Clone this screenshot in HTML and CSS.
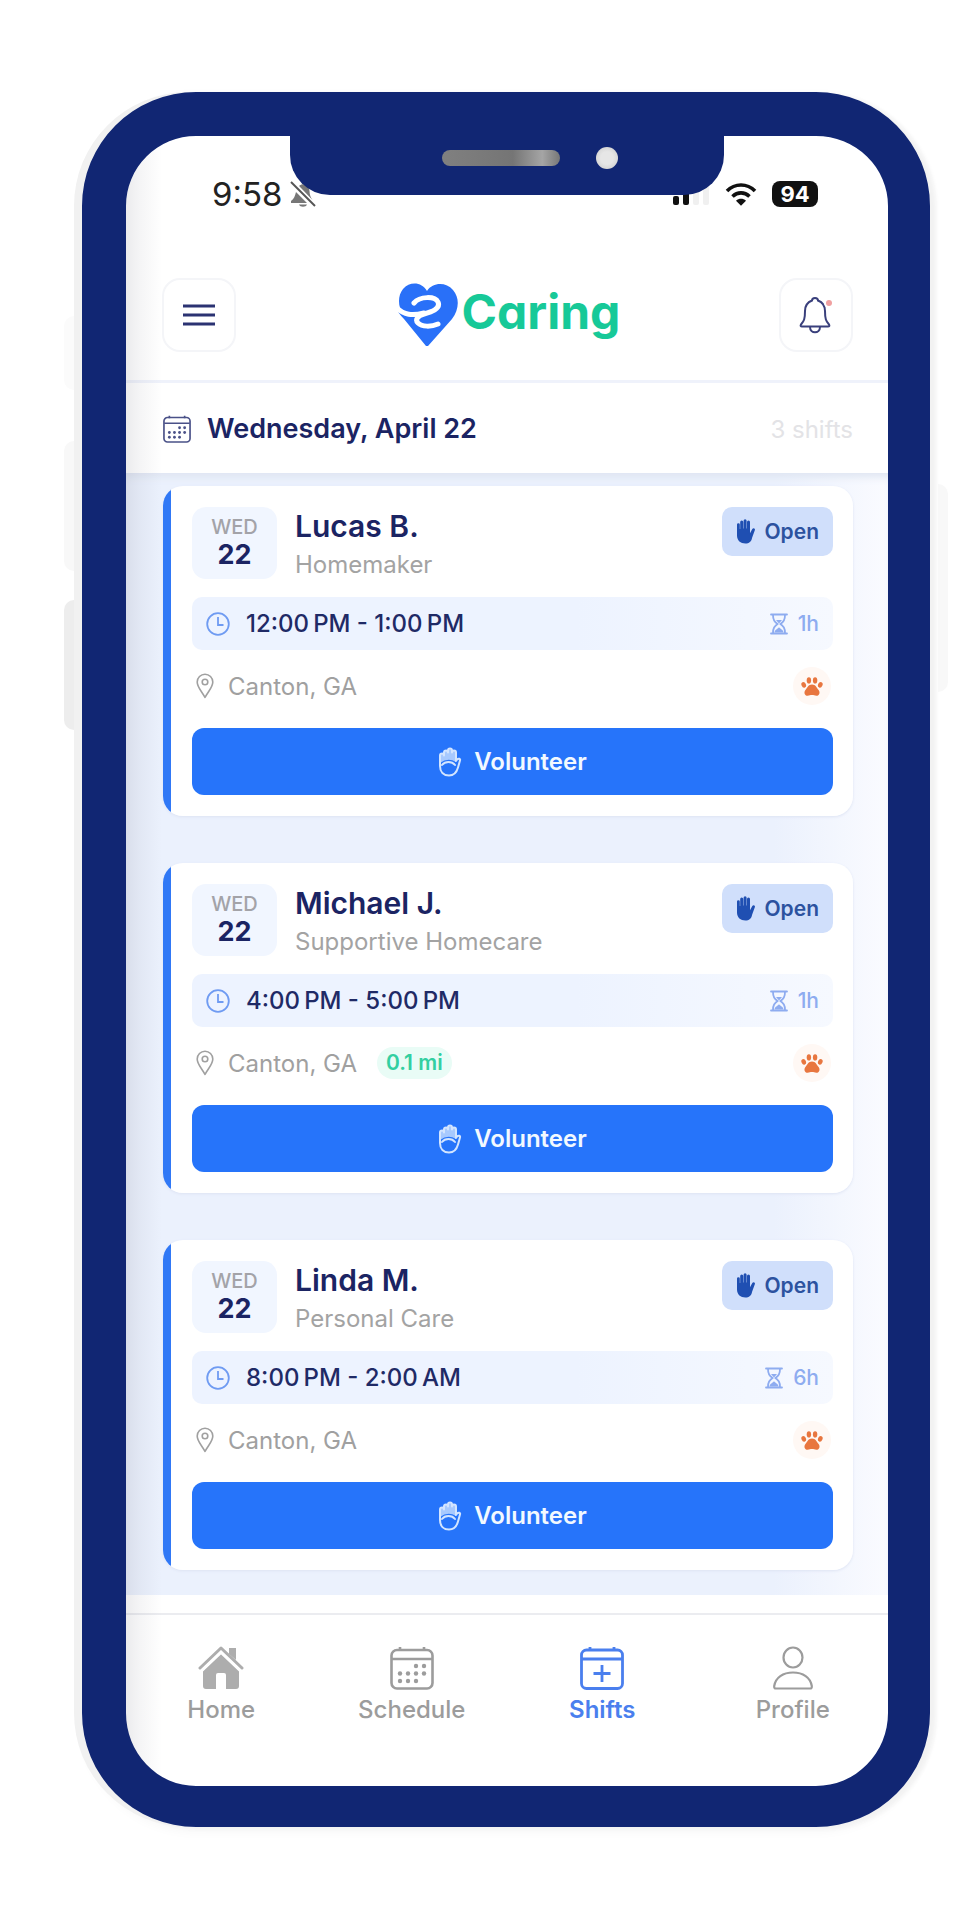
FILE: index.html
```html
<!DOCTYPE html>
<html lang="en">
<head>
    <meta charset="UTF-8">
    <meta name="viewport" content="width=device-width, initial-scale=1.0">
    <title>eCaring - Shifts</title>
    <link rel="stylesheet" href="styles.css">
</head>
<body>
    <!-- Icons shared by the cards -->
    <svg class="sprite" aria-hidden="true">
        <symbol id="hand-fill" viewBox="0 0 20 25">
            <path fill="currentColor" d="M1 5.600a1.400 1.400 0 0 1 2.800 0V10h.4V3a1.400 1.400 0 0 1 3 0v6.400h.4V1.700a1.500 1.500 0 0 1 3 0v7.700h.4V3a1.400 1.400 0 0 1 3 0v11.200l2.300-4.300c.9-1.500 3.200-.6 2.600 1.200l-2.800 7.600C15.600 22.400 13 24.500 9.400 24.500 4.600 24.500 1 21.500 1 16.500z"/>
        </symbol>
        <symbol id="hand-line" viewBox="0 0 24 30">
            <path fill="currentColor" opacity=".75" d="M2 15V8q2-3 4-1V5q2-3 4-1 2-4 4 0 3-2 4 1v10q-8-5-16 1z"/>
            <g fill="none" stroke="currentColor" stroke-width="2" stroke-linecap="round" stroke-linejoin="round">
                <path d="M2 17V8.500a2 2 0 0 1 4 0V5.500a2 2 0 0 1 4 0V3.500a2 2 0 0 1 4 0v2a2 2 0 0 1 4 0V14l1-1.500c1.500-1.500 3.700-.8 3 1l-2 7C18.500 26 16 28.500 11 28.500 5.500 28.500 2 25 2 19v-2"/>
                <path d="M4 18c3-4 10-4 13 0"/>
            </g>
        </symbol>
        <symbol id="clock" viewBox="0 0 24 24">
            <circle cx="12" cy="12" r="10.800" fill="none" stroke="currentColor" stroke-width="1.800"/>
            <path d="M12 5v8h5.500" fill="none" stroke="currentColor" stroke-width="1.800"/>
        </symbol>
        <symbol id="hourglass" viewBox="0 0 18 22">
            <path d="M1 1.500h16M1 20.500h16M3 2c0 5 1.500 6.500 4.500 9C4.500 13.500 3 15 3 20M15 2c0 5-1.500 6.500-4.500 9 3 2.500 4.500 4 4.500 9" fill="none" stroke="currentColor" stroke-width="1.800" stroke-linecap="round"/>
            <path d="M6 7h6l-3 3.500zM4.500 19.500c0-3 4.500-4 4.500-5.500 0 1.500 4.500 2.500 4.500 5.500z" fill="currentColor"/>
        </symbol>
        <symbol id="pin" viewBox="0 0 18 26">
            <path d="M9 24.500C6 18.500 1.200 14.500 1.200 9a7.800 7.800 0 0 1 15.600 0c0 5.500-4.800 9.500-7.800 15.500z" fill="none" stroke="currentColor" stroke-width="1.600" stroke-linejoin="round"/>
            <circle cx="9" cy="9" r="2.800" fill="none" stroke="currentColor" stroke-width="1.600"/>
        </symbol>
        <symbol id="paw" viewBox="0 0 22 19">
            <g fill="currentColor">
                <ellipse cx="2.700" cy="7.800" rx="2.200" ry="2.900" transform="rotate(-25 2.700 7.800)"/>
                <ellipse cx="7.900" cy="3.400" rx="2.200" ry="3.100"/>
                <ellipse cx="14.100" cy="3.400" rx="2.200" ry="3.100"/>
                <ellipse cx="19.300" cy="7.800" rx="2.200" ry="2.900" transform="rotate(25 19.300 7.800)"/>
                <path d="M11 7.500c3.600 0 4.600 3.200 6.400 5.200 2.200 2.500 1 6.100-1.900 6.100-1.900 0-2.900-.7-4.500-.7s-2.600.7-4.500.7c-2.900 0-4.100-3.600-1.900-6.100 1.800-2 2.800-5.200 6.400-5.200z"/>
            </g>
        </symbol>
        <symbol id="calendar" viewBox="0 0 44 44">
            <g fill="none" stroke="currentColor" stroke-width="2.600">
                <rect x="1.500" y="4" width="41" height="38.500" rx="5.500"/>
                <path d="M2 13h40M10 1v4M34 1v4"/>
            </g>
            <g fill="currentColor">
                <circle cx="26" cy="20" r="2.200"/><circle cx="34" cy="20" r="2.200"/>
                <circle cx="10" cy="27.500" r="2.200"/><circle cx="18" cy="27.500" r="2.200"/><circle cx="26" cy="27.500" r="2.200"/><circle cx="34" cy="27.500" r="2.200"/>
                <circle cx="10" cy="35" r="2.200"/><circle cx="18" cy="35" r="2.200"/><circle cx="26" cy="35" r="2.200"/>
            </g>
        </symbol>
    </svg>

    <div class="phone">
        <span class="side-btn silent"></span>
        <span class="side-btn vol-up"></span>
        <span class="side-btn vol-down"></span>
        <span class="side-btn power"></span>

        <div class="notch">
            <span class="speaker"></span>
            <span class="camera"></span>
        </div>

        <div class="screen">
            <div class="status-bar">
                <div class="status-left">
                    <span class="time">9:58</span>
                    <svg width="26" height="28" viewBox="0 0 26 28" aria-hidden="true">
                        <path fill="#777" d="M1 21c3-2 4-5 5-9l11 11H1zM9 6c4-4 10-1 10.500 5 .2 4 1 6 3 9zM9 24.500h8c-1 3-7 3-8 0z"/>
                        <path d="M2 2l23 24" stroke="#fff" stroke-width="4"/>
                        <path d="M1 2l24 24" stroke="#555" stroke-width="2"/>
                    </svg>
                </div>
                <div class="status-right">
                    <svg width="38" height="24" viewBox="0 0 38 24" aria-hidden="true">
                        <rect x="1" y="14" width="6" height="9" rx="2" fill="#111"/>
                        <rect x="11" y="10" width="6" height="13" rx="2" fill="#111"/>
                        <rect x="21" y="5" width="6" height="18" rx="2" fill="#f0f0f0"/>
                        <rect x="31" y="0" width="6" height="23" rx="2" fill="#f0f0f0"/>
                    </svg>
                    <svg width="32" height="24" viewBox="0 0 32 24" aria-hidden="true">
                        <path d="M2 9c8-8 20-8 28 0M7.500 14.500c5-4.800 12-4.800 17 0" fill="none" stroke="#111" stroke-width="3.600"/>
                        <path d="M11 18.800c3-2.600 7-2.600 10 0l-5 4.900z" fill="#111"/>
                    </svg>
                    <span class="battery">94</span>
                </div>
            </div>

            <header class="header">
                <button class="icon-btn" type="button" aria-label="Menu">
                    <svg width="32" height="24" viewBox="0 0 32 24"><path d="M0 3h32M0 12h32M0 21h32" stroke="#2b3272" stroke-width="3"/></svg>
                </button>
                <a class="logo" href="#">
                    <svg width="64" height="64" viewBox="0 0 64 64" aria-hidden="true">
                        <path fill="#2970f8" d="M32 8C38-1 51-1 58 7c7 8 6 20-1 29L33 63h-2L9 36C5 32 2 28 1 23l4 2C3 18 4 11 8 6c7-8 19-7 24 2z"/>
                        <path d="M19 20c6-7 21-7 24-1 3 7-7 10-14 12-7 2-9 6-6 9 4 4 13 4 20 1M2 25c7 7 15 8 27 5" fill="none" stroke="#fff" stroke-width="5" stroke-linecap="round"/>
                    </svg>
                    <span class="logo-text">Caring</span>
                </a>
                <button class="icon-btn" type="button" aria-label="Notifications">
                    <svg width="34" height="40" viewBox="0 0 34 40">
                        <path d="M16 3c-2 0-3 1-3 2.500C8 7.500 6 11 6 16c0 8-1 10-4 13.500-.8 1.200-.3 2 1 2h26c1.300 0 1.800-.8 1-2C27 26 26 24 26 16c0-5-2-8.500-7-10.500C19 4 18 3 16 3zM11 32c0 7 10 7 10 0" fill="none" stroke="#3a407c" stroke-width="2"/>
                        <circle cx="30" cy="8" r="5" fill="#fff"/>
                        <circle cx="30" cy="8" r="3" fill="#f0a0a0"/>
                    </svg>
                </button>
            </header>

            <div class="date-bar">
                <svg class="date-icon" width="28" height="28"><use href="#calendar"/></svg>
                <h1>Wednesday, April 22</h1>
                <span class="count">3 shifts</span>
            </div>

            <main class="shifts">
                <article class="card">
                    <div class="card-top">
                        <div class="day"><span>WED</span><b>22</b></div>
                        <div class="who">
                            <h2>Lucas B.</h2>
                            <p>Homemaker</p>
                        </div>
                        <span class="badge"><svg width="20" height="25"><use href="#hand-fill"/></svg>Open</span>
                    </div>
                    <div class="hours">
                        <svg width="24" height="24"><use href="#clock"/></svg>
                        <span class="range">12:00&#8239;PM - 1:00&#8239;PM</span>
                        <span class="length"><svg width="18" height="22"><use href="#hourglass"/></svg>1h</span>
                    </div>
                    <div class="place">
                        <svg width="18" height="26"><use href="#pin"/></svg>
                        <span>Canton, GA</span>
                        <span class="pets"><svg width="22" height="19"><use href="#paw"/></svg></span>
                    </div>
                    <button class="volunteer" type="button"><svg width="24" height="30"><use href="#hand-line"/></svg>Volunteer</button>
                </article>

                <article class="card">
                    <div class="card-top">
                        <div class="day"><span>WED</span><b>22</b></div>
                        <div class="who">
                            <h2>Michael J.</h2>
                            <p>Supportive Homecare</p>
                        </div>
                        <span class="badge"><svg width="20" height="25"><use href="#hand-fill"/></svg>Open</span>
                    </div>
                    <div class="hours">
                        <svg width="24" height="24"><use href="#clock"/></svg>
                        <span class="range">4:00&#8239;PM - 5:00&#8239;PM</span>
                        <span class="length"><svg width="18" height="22"><use href="#hourglass"/></svg>1h</span>
                    </div>
                    <div class="place">
                        <svg width="18" height="26"><use href="#pin"/></svg>
                        <span>Canton, GA</span>
                        <span class="distance">0.1 mi</span>
                        <span class="pets"><svg width="22" height="19"><use href="#paw"/></svg></span>
                    </div>
                    <button class="volunteer" type="button"><svg width="24" height="30"><use href="#hand-line"/></svg>Volunteer</button>
                </article>

                <article class="card">
                    <div class="card-top">
                        <div class="day"><span>WED</span><b>22</b></div>
                        <div class="who">
                            <h2>Linda M.</h2>
                            <p>Personal Care</p>
                        </div>
                        <span class="badge"><svg width="20" height="25"><use href="#hand-fill"/></svg>Open</span>
                    </div>
                    <div class="hours">
                        <svg width="24" height="24"><use href="#clock"/></svg>
                        <span class="range">8:00&#8239;PM - 2:00&#8239;AM</span>
                        <span class="length"><svg width="18" height="22"><use href="#hourglass"/></svg>6h</span>
                    </div>
                    <div class="place">
                        <svg width="18" height="26"><use href="#pin"/></svg>
                        <span>Canton, GA</span>
                        <span class="pets"><svg width="22" height="19"><use href="#paw"/></svg></span>
                    </div>
                    <button class="volunteer" type="button"><svg width="24" height="30"><use href="#hand-line"/></svg>Volunteer</button>
                </article>
            </main>

            <nav class="tabs">
                <a href="#home">
                    <svg width="46" height="44" viewBox="0 0 46 44" fill="#adadad">
                        <path d="M5 24L23 7l18 17v16a3 3 0 0 1-3 3H28V29a2 2 0 0 0-2-2h-6a2 2 0 0 0-2 2v14H8a3 3 0 0 1-3-3z"/>
                        <path d="M31 2h7v12l-7-6z"/>
                        <path d="M4 25L23 7l19 18" fill="none" stroke="#fff" stroke-width="2"/>
                        <path d="M2 22L23 2l21 20" fill="none" stroke="#adadad" stroke-width="3" stroke-linecap="round" stroke-linejoin="round"/>
                    </svg>
                    Home
                </a>
                <a href="#schedule">
                    <svg width="44" height="44"><use href="#calendar"/></svg>
                    Schedule
                </a>
                <a class="active" href="#shifts">
                    <svg width="44" height="44" viewBox="0 0 44 44" fill="none" stroke="currentColor" stroke-width="2.800">
                        <rect x="1.500" y="4" width="41" height="38.500" rx="5"/>
                        <path d="M2 13h40M10 1v4M34 1v4M22 19v17M13.500 27.500h17"/>
                    </svg>
                    Shifts
                </a>
                <a href="#profile">
                    <svg width="44" height="44" viewBox="0 0 44 44" fill="none" stroke="currentColor" stroke-width="2.200">
                        <ellipse cx="22" cy="11.500" rx="9.500" ry="10"/>
                        <path d="M5 42.500c-1.500 0-2-1-1.800-2.500C4.500 31.500 12 26.500 22 26.500S39.500 31.500 40.800 40c.2 1.500-.3 2.500-1.800 2.500z"/>
                    </svg>
                    Profile
                </a>
            </nav>
        </div>
    </div>
</body>
</html>
```

FILE: styles.css
```css
* {
    margin: 0;
    padding: 0;
    box-sizing: border-box;
}

body {
    font-family: Inter, "Liberation Sans", sans-serif;
    background: #fff;
    color: #1b2463;
    padding: 92px 50px 94px 82px;
}

a {
    text-decoration: none;
}

button {
    font-family: inherit;
    cursor: pointer;
}

svg {
    display: block;
    flex: none;
}

.sprite {
    position: absolute;
    width: 0;
    height: 0;
}

/* Phone body */
.phone {
    position: relative;
    border: solid #112673;
    border-width: 44px 42px 41px 44px;
    border-radius: 114px;
    background: #fff;
    box-shadow: -8px 0 0 #f1f1f1, 6px 2px 4px #f2f2f2, 0 4px 12px #f6f6f6;
}

.side-btn {
    position: absolute;
    left: -62px;
    width: 10px;
    height: 130px;
    border-radius: 10px 0 0 10px;
    background: #f8f8f8;
}

.silent {
    top: 180px;
    height: 74px;
    background: #fbfbfb;
}

.vol-up {
    top: 305px;
}

.vol-down {
    top: 464px;
    background: #ededed;
}

.power {
    top: 348px;
    left: auto;
    right: -60px;
    height: 208px;
    border-radius: 0 10px 10px 0;
}

.notch {
    position: absolute;
    z-index: 2;
    top: -1px;
    left: 50%;
    width: 434px;
    height: 60px;
    transform: translateX(-50%);
    background: #112673;
    border-radius: 0 0 40px 40px;
}

.speaker {
    position: absolute;
    top: 15px;
    left: 152px;
    width: 118px;
    height: 16px;
    border-radius: 8px;
    background: linear-gradient(90deg, #808080, #757575 60%, #a5a5a5 85%, #777);
}

.camera {
    position: absolute;
    top: 12px;
    left: 306px;
    width: 22px;
    height: 22px;
    border-radius: 50%;
    background: radial-gradient(#e6e6e6 40%, #c8c8c8);
}

.screen {
    position: relative;
    border-radius: 70px;
    overflow: hidden;
}

/* shade along the left edge of the glass */
.screen::after {
    content: "";
    position: absolute;
    inset: 0 auto 0 0;
    width: 36px;
    background: linear-gradient(90deg, rgba(60, 60, 80, 0.1), rgba(60, 60, 80, 0.05) 40%, transparent);
    pointer-events: none;
}

/* Status bar */
.status-bar {
    display: flex;
    justify-content: space-between;
    align-items: center;
    padding: 38px 70px 35px 86px;
}

.status-left,
.status-right {
    display: flex;
    align-items: center;
}

.status-left {
    gap: 8px;
}

.status-right {
    gap: 15px;
}

.time {
    font-size: 33px;
    line-height: 40px;
    color: #222;
}

.battery {
    width: 46px;
    border-radius: 8px;
    background: #111;
    color: #fff;
    font-size: 22px;
    font-weight: 700;
    line-height: 26px;
    text-align: center;
}

/* Header */
.header {
    display: flex;
    justify-content: space-between;
    align-items: center;
    padding: 29px 35px 28px 36px;
    border-bottom: 3px solid #eff2fb;
}

.icon-btn {
    display: flex;
    justify-content: center;
    align-items: center;
    width: 74px;
    height: 74px;
    border: 2px solid #f4f5f8;
    border-radius: 18px;
    background: #fff;
}

.logo {
    display: flex;
    align-items: center;
    gap: 3px;
}

.logo-text {
    color: #17c998;
    font-size: 48px;
    font-weight: 700;
    line-height: 56px;
    margin-bottom: 6px;
    font-feature-settings: "cv11";
}

/* Date row */
.date-bar {
    display: flex;
    align-items: center;
    padding: 30px 35px 28px 37px;
}

.date-icon {
    color: #4a5188;
}

.date-bar h1 {
    margin-left: 16px;
    font-size: 27px;
    font-weight: 600;
    line-height: 32px;
}

.count {
    margin-left: auto;
    color: #e3e3e6;
    font-size: 24px;
}

/* Shift cards */
.shifts {
    display: grid;
    gap: 47px;
    padding: 13px 35px 25px 37px;
    background: linear-gradient(90deg, #ebf1fd 85%, #fafbff);
    box-shadow: inset 0 8px 8px -4px #dfe5f1;
}

.card {
    display: grid;
    gap: 18px;
    padding: 21px 20px 21px 29px;
    border-radius: 20px;
    background: linear-gradient(90deg, #3078f6 8px, #fff 8px);
    box-shadow: 0 1px 3px #dde3f3;
}

.card-top {
    display: flex;
    align-items: flex-start;
    gap: 18px;
}

.day {
    display: flex;
    flex-direction: column;
    align-items: center;
    width: 85px;
    height: 72px;
    padding-top: 7px;
    border-radius: 14px;
    background: #f1f6ff;
}

.day span {
    color: #a3a3a8;
    font-size: 20px;
    font-weight: 500;
    line-height: 26px;
}

.day b {
    font-size: 27px;
    font-weight: 700;
    line-height: 30px;
}

.who {
    flex: 1;
}

.who h2 {
    font-size: 30px;
    font-weight: 600;
    line-height: 38px;
}

.who p {
    color: #a3a3a3;
    font-size: 24px;
    line-height: 40px;
    margin-bottom: -6px;
}

.badge {
    display: flex;
    align-items: center;
    gap: 8px;
    height: 49px;
    padding: 0 14px;
    border-radius: 10px;
    background: #d0dffb;
    color: #2c529f;
    font-size: 21px;
    font-weight: 600;
}

.badge svg {
    color: #1f4fb2;
}

.hours {
    display: flex;
    align-items: center;
    height: 53px;
    padding: 0 14px;
    border-radius: 10px;
    background: linear-gradient(90deg, #edf3ff 60%, #f6f9ff);
    color: #6f9bf2;
}

.range {
    margin-left: 16px;
    color: #1f2a66;
    font-size: 24px;
    font-weight: 500;
}

.length {
    display: flex;
    align-items: center;
    gap: 10px;
    margin-left: auto;
    color: #8eacf0;
    font-size: 21px;
    font-weight: 500;
}

.place {
    display: flex;
    align-items: center;
    height: 36px;
    margin-bottom: 6px;
    padding: 0 2px 0 4px;
    color: #a0a0a0;
    font-size: 24px;
}

.place > svg {
    margin-right: 14px;
}

.distance {
    margin-left: 20px;
    padding: 0 9px;
    border-radius: 16px;
    background: #e9fcf6;
    color: #33cfa1;
    font-size: 21px;
    font-weight: 600;
    line-height: 32px;
}

.pets {
    display: flex;
    justify-content: center;
    align-items: center;
    width: 38px;
    height: 38px;
    margin-left: auto;
    border-radius: 50%;
    background: #fff8f4;
    color: #e8763f;
}

.volunteer {
    display: flex;
    justify-content: center;
    align-items: center;
    gap: 12px;
    height: 67px;
    border: none;
    border-radius: 12px;
    background: #2674fa;
    color: #f2f9ff;
    font-size: 24px;
    font-weight: 600;
}

.volunteer svg {
    color: #d3e5ff;
}

/* Bottom tabs */
.tabs {
    display: grid;
    grid-template-columns: repeat(4, 1fr);
    margin-top: 18px;
    padding: 31px 0 60px;
    border-top: 2px solid #ebecf0;
}

.tabs a {
    display: flex;
    flex-direction: column;
    align-items: center;
    gap: 4px;
    color: #9c9c9c;
    font-size: 24px;
    font-weight: 500;
    line-height: 32px;
}

.tabs .active {
    color: #4a7fee;
    font-weight: 600;
}
```
